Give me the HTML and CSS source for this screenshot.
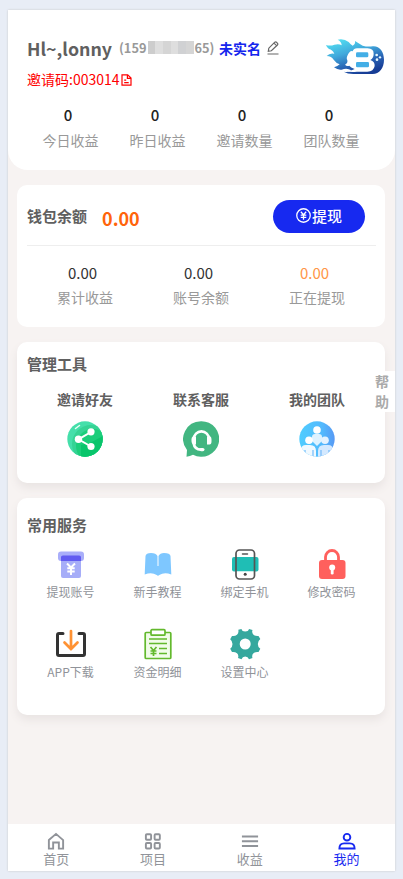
FILE: index.html
```html
<!DOCTYPE html>
<html lang="zh-CN">
<head>
<meta charset="utf-8">
<title>我的</title>
<link rel="stylesheet" href="styles.css">
</head>
<body>
<div class="app">
  <header class="profile">
    <div class="profile-top">
      <div class="identity">
        <div class="name-row">
          <span class="name">Hl~,lonny</span>
          <span class="phone">(159<i class="mask"><b></b><b></b><b></b><b></b><b></b><b></b></i>65)</span>
          <span class="verify">未实名</span>
          <svg class="edit" viewBox="0 0 12 14" fill="none" stroke="#666" stroke-width="1.2"><path d="M1.3 10.3 1.8 7.2 7.8 1.2Q8.6.5 9.5 1.3L10.5 2.3Q11.2 3.1 10.4 4L4.4 9.8ZM7 2.2l2.5 2.5M.5 13h11"/></svg>
        </div>
        <div class="invite"><span>邀请码:003014</span><svg viewBox="0 0 11 12" fill="none" stroke="#f00" stroke-width="1.2"><path d="M1 .8h5.7L10 4v7.2H1ZM6.4 1v3.3H10M3.2 6.2h2M3.2 8.7h4.5"/></svg></div>
      </div>
      <svg class="logo" viewBox="15 20 180 114">
        <defs><linearGradient id="flame" x1=".1" y1="0" x2=".6" y2="1"><stop offset="0" stop-color="#55e4f3"/><stop offset=".42" stop-color="#40a9dc"/><stop offset=".75" stop-color="#2860b2"/><stop offset="1" stop-color="#173d96"/></linearGradient></defs>
        <path fill="url(#flame)" d="M18 44Q31 48 43 43Q57 39 65 45Q65 34 53 28Q72 24 86 35Q92 43 98 46Q107 42 105 32Q116 39 128 46Q142 50 158 48C178 46 192 64 192 88C192 114 178 130 158 131H108Q85 133 71 124Q86 127 94 120Q81 112 65 118Q54 120 42 111Q53 108 59 102Q48 98 41 88Q35 78 20 77Q29 67 43 70Q37 58 27 56Q20 51 18 44Z"/>
        <path fill="#fff" d="M86 69Q92 60 98 63Q101 54 111 54H143Q161 55 161 70Q161 83 151 89Q165 94 164 107Q161 124 142 124H111Q88 127 77 121Q94 123 104 116Q92 112 88 106Q80 109 75 103Q84 98 82 90Q77 83 86 69Z"/>
        <rect x="108" y="66" width="37" height="15" rx="4" fill="#43aee6"/><rect x="108" y="95" width="39" height="16" rx="4" fill="#43aee6"/>
        <g fill="#e4f8ff"><circle cx="170" cy="74" r="4"/><circle cx="180" cy="81" r="3.5"/><circle cx="171" cy="88" r="4"/></g>
      </svg>
    </div>
    <div class="stats">
      <div class="stat"><b>0</b><span>今日收益</span></div>
      <div class="stat"><b>0</b><span>昨日收益</span></div>
      <div class="stat"><b>0</b><span>邀请数量</span></div>
      <div class="stat"><b>0</b><span>团队数量</span></div>
    </div>
  </header>

  <main>
    <section class="card wallet">
      <div class="wallet-top">
        <h2>钱包余额</h2><strong>0.00</strong>
        <button class="withdraw"><svg viewBox="0 0 14 14" fill="none" stroke="#fff" stroke-width="1.2"><circle cx="7" cy="7" r="6.3"/><path d="M4.5 3.5 7 6.3l2.5-2.8M7 6v5M4.4 6.7h5.2M4.4 8.8h5.2"/></svg><span>提现</span></button>
      </div>
      <div class="stats amounts">
        <div class="stat"><b>0.00</b><span>累计收益</span></div>
        <div class="stat"><b>0.00</b><span>账号余额</span></div>
        <div class="stat pending"><b>0.00</b><span>正在提现</span></div>
      </div>
    </section>

    <section class="card tools">
      <h2>管理工具</h2>
      <div class="tool-list">
        <div class="tool"><span>邀请好友</span>
          <svg viewBox="0 0 36 36"><defs><clipPath id="round"><circle cx="18" cy="18" r="17.7"/></clipPath></defs><g clip-path="url(#round)"><path fill="#45dfaa" d="M0 0h36v36H0z"/><circle cx="24" cy="23" r="19" fill="#35d394"/><circle cx="26" cy="25" r="17" fill="#1bce7a"/><path fill="#09c56b" d="M14 24l9-2 13-7v21H14z"/></g><path d="m8.5 7.5 4-3" stroke="#e9fff5" stroke-width="1.5" stroke-linecap="round"/><path d="M24 11 11.5 18.3 24 25.5" fill="none" stroke="#fff" stroke-width="2"/><g fill="#fff"><circle cx="24" cy="10.8" r="3.6"/><circle cx="11.5" cy="18.2" r="3.7"/><circle cx="24" cy="25.5" r="3.6"/></g></svg>
        </div>
        <div class="tool"><span>联系客服</span>
          <svg viewBox="0 0 36 36"><path fill="#42b681" d="M18 .2a17.8 17.8 0 1 1-8 33.5Q7 35.4 3.5 35.7L4 29A17.8 17.8 0 0 1 18 .2Z"/><path d="M10.8 18a7.6 7.600 0 0 1 15.200 0M10.500 22Q11.500 28.600 18 28.600" fill="none" stroke="#fff" stroke-width="2.600"/><path fill="#fff" d="M10 15.500h3v8h-2Q8.500 23 8.500 20v-2Q8.500 16 10 15.500ZM24 15.500h3.500q1 1 1 3v2q0 3-2 3H24Z"/><rect x="16.500" y="27" width="5" height="3.200" rx="1.600" fill="#fff"/></svg>
        </div>
        <div class="tool"><span>我的团队</span>
          <svg viewBox="0 0 36 36"><defs><linearGradient id="team"><stop stop-color="#50cdff"/><stop offset=".65" stop-color="#53b9fd"/><stop offset="1" stop-color="#5798f4"/></linearGradient></defs><g clip-path="url(#round)"><path fill="url(#team)" d="M0 0h36v36H0z"/><path fill="#def2ff" d="M13 20v-4q0-3 3-3h4q3 0 3 3v4l-5 5z"/><path fill="#f0f9ff" d="M2 36v-7q0-5 5-5h4q6 0 6 6v6Z"/><path fill="#d4e9ff" d="M19 36v-6q0-6 6-6h4q5 0 5 5v7Z"/><path stroke="#71bafa" stroke-width="1.2" d="M6 29v7M14 29v7M22 29v7M30 29v7"/></g><g fill="#fff"><circle cx="18" cy="9" r="3.800"/><circle cx="10" cy="19.300" r="3.800"/><circle cx="26" cy="19.300" r="3.800" fill="#e4f2ff"/></g></svg>
        </div>
      </div>
    </section>

    <section class="card services">
      <h2>常用服务</h2>
      <div class="service-list">
        <div class="service"><svg viewBox="0 0 32 32"><rect x="3" y="3.500" width="26" height="9.500" rx="3" fill="#a9aefa"/><rect x="6" y="7" width="20" height="23" rx="2" fill="#a6adf8"/><path fill="#625cf1" d="M6 13V9q0-1.500 2-1.500h16q2 0 2 1.500v4z"/><path d="m12 15.500 4 4 4-4M16 19v8M12.300 20.300h7.400M12.300 23.500h7.400" fill="none" stroke="#fff" stroke-width="2"/></svg><span>提现账号</span></div>
        <div class="service"><svg viewBox="0 0 32 32"><path fill="#7ec7ff" d="M3.500 8Q4 5 9 5q5 0 6.500 3v10h1V8Q18 5 22 5q6 0 6.500 3L29.300 26.500q-7-2.500-12 .5-1.300 1.500-2.600 0-5-3-12-.5Z"/></svg><span>新手教程</span></div>
        <div class="service"><svg viewBox="0 0 32 32"><rect x="3" y="9" width="26.500" height="14.500" rx="2" fill="#1fbeb5"/><path fill="#fff" d="M7 9V5q0-3 3-3h12.500q3 0 3 3v4zM7 23.500h18.500v4q0 3.500-3 3.500H10q-3 0-3-3.500z"/><rect x="7" y="2" width="18.500" height="29" rx="3.500" fill="none" stroke="#555" stroke-width="1.700"/><path d="M13.500 6h5" stroke="#555" stroke-width="1.500" stroke-linecap="round"/><circle cx="16.200" cy="26.300" r="1.500" fill="#444"/></svg><span>绑定手机</span></div>
        <div class="service"><svg viewBox="0 0 32 32"><path d="M9.500 14V9a6.500 6.500 0 0 1 13 0v5" fill="none" stroke="#ff605d" stroke-width="2.800"/><rect x="3" y="12" width="26.500" height="19" rx="3" fill="#ff605d"/><circle cx="16.200" cy="19.500" r="3" fill="#fff"/><rect x="14.800" y="20" width="2.800" height="6.500" rx="1.300" fill="#fff"/></svg><span>修改密码</span></div>
        <div class="service"><svg viewBox="0 0 32 32" fill="none" stroke-width="3"><path stroke="#333" stroke-linejoin="round" stroke-linecap="round" d="M8 5.500H4Q2.500 5.500 2.500 7v19q0 1.500 1.500 1.500h24q1.500 0 1.500-1.500V7q0-1.500-1.500-1.500h-4"/><path stroke="#ff9233" stroke-width="2.700" stroke-linecap="round" d="M16 3v18M9.500 14.500 16 21l6.500-6.500"/></svg><span>APP下载</span></div>
        <div class="service"><svg viewBox="0 0 32 32" fill="none" stroke="#63b92d" stroke-width="1.700"><rect x="3.200" y="4.500" width="25.600" height="26" rx="1" fill="#f1fce9"/><rect x="9" y="1.700" width="14" height="5.500" rx="1" fill="#fff"/><path d="M7 11h18M7 15.500h18M17 20.500h8M17 25.500h8M8.500 19l3 3.500 3-3.500M11.500 22v6M8.500 23h6M8.500 25.500h6"/></svg><span>资金明细</span></div>
        <div class="service"><svg viewBox="0 0 32 32"><path fill="#35a89e" fill-rule="evenodd" d="M9.300 1.700 12.500 1Q13 3.500 16.200 3.500T20 1l3.500 1Q22.500 5 24.500 6.700T29.500 8L31.300 11Q28.800 13 28.800 16t2.500 4.800L29.500 24q-3-.5-5 1.300T23.500 30L20 31.200Q19 28.500 16.200 28.500T12.500 31.200L9 30q1-3-1-4.700T3 24L1.200 20.800Q3.500 19 3.500 16T1.200 11.200L3 8q3 .5 5-1.300T9.300 1.700ZM16.200 10.500a5.500 5.500 0 1 0 0 11 5.500 5.500 0 1 0 0-11Z"/></svg><span>设置中心</span></div>
      </div>
    </section>
  </main>

  <nav class="tabs">
    <div class="tab"><svg viewBox="0 0 20 20"><path d="M2.500 8.500 10 2l7.500 6.500v9H13V11H7v6.500H2.500Z"/></svg><span>首页</span></div>
    <div class="tab"><svg viewBox="0 0 20 20"><rect x="2.500" y="2.300" width="5.500" height="5.800" rx="1"/><rect x="11.700" y="2.300" width="5.500" height="5.800" rx="1"/><rect x="2.500" y="11.500" width="5.500" height="5.800" rx="1"/><rect x="11.700" y="11.500" width="5.500" height="5.800" rx="1"/></svg><span>项目</span></div>
    <div class="tab"><svg viewBox="0 0 20 20"><path d="M1.500 4.700h17M1.500 9.700h17M1.500 14.700h17"/></svg><span>收益</span></div>
    <div class="tab active"><svg viewBox="0 0 20 20"><circle cx="10" cy="5.500" r="3.500"/><path d="M2 17.400Q2 12 7 12h6q5 0 5 5.400Z"/></svg><span>我的</span></div>
  </nav>
  <aside class="help">帮助</aside>
</div>
</body>
</html>
```

FILE: styles.css
```css
* { box-sizing: border-box; }

body {
  margin: 0;
  height: 879px;
  padding: 10px 8px 8px;
  background: #e8edf6;
  color: #333;
  font-family: "Noto Sans CJK SC", sans-serif;
  font-size: 14px;
  overflow: hidden;
}

svg { display: block; flex: none; }
h2 { margin: 0; font-size: 15px; line-height: 22px; font-weight: 700; color: #606060; }

.app {
  position: relative;
  display: flex;
  flex-direction: column;
  width: 387px;
  height: 861px;
  background: #f7f3f2;
  box-shadow: 0 0 2px #c8c8c8;
}

.profile {
  height: 160px;
  padding: 26px 10px 0 19px;
  background: #fff;
  border-radius: 0 0 20px 20px;
}
.profile-top { display: flex; justify-content: space-between; height: 66px; }
.name-row { display: flex; align-items: center; height: 23px; white-space: nowrap; }
.name { width: 92px; font-size: 17.8px; font-weight: 700; color: #606060; }
.phone { display: flex; align-items: center; width: 100px; font-size: 12.8px; font-weight: 700; color: #999; }
.mask { display: flex; width: 46px; height: 13px; margin: 0 1px; }
.mask b { flex: 1; background: #dedede; }
.mask b:nth-child(1) { background: #cdcdcd; }
.mask b:nth-child(3n) { background: #d5d5d5; }
.mask b:nth-child(5) { background: #d0d1d3; }
.verify { width: 48px; color: #1526ed; font-weight: 700; }
.edit { width: 12px; height: 14px; }
.invite { display: flex; align-items: center; height: 20px; margin-top: 10px; color: #f00; }
.invite svg { width: 11px; height: 12px; margin: 1px 0 0 1px; }
.logo { width: 60px; height: 38px; margin-top: 1px; }

.stats { display: flex; width: 348px; }
.stat { flex: 1; text-align: center; }
.stat b { display: block; padding-right: 5px; font-size: 15px; line-height: 26px; font-weight: 500; color: #222; }
.stat span { display: block; line-height: 24px; color: #999; }

main { flex: 1; padding: 15px 10px 0 9px; }
.card {
  margin-bottom: 15px;
  padding: 0 9px 0 10px;
  background: #fff;
  border-radius: 10px;
}

.wallet { height: 142px; }
.wallet-top { display: flex; align-items: center; height: 61px; border-bottom: 1px solid #eee; }
.wallet-top h2 { margin-top: 2px; }
.wallet-top strong { margin: 5px 0 0 15px; font-size: 18px; font-weight: 700; color: #ff640b; }
.withdraw {
  display: flex;
  align-items: center;
  justify-content: center;
  width: 92px;
  height: 33px;
  margin: 2px 11px 0 auto;
  padding: 0 0 1px;
  border: 0;
  border-radius: 17px;
  background: #1729f0;
  color: #fff;
  font: 500 15px "Noto Sans CJK SC", sans-serif;
}
.withdraw svg { width: 15px; height: 15px; margin-right: 1px; }
.amounts { padding-top: 14px; }
.amounts .stat b { font-weight: 400; line-height: 25px; color: #333; }
.amounts .pending b { color: #ff9648; }

.tools { height: 141px; padding-top: 11px; box-shadow: 0 5px 8px #e9e4e3; }
.tool-list { display: flex; width: 348px; margin-top: 13px; }
.tool { flex: 1; display: flex; flex-direction: column; align-items: center; }
.tool span { line-height: 22px; font-weight: 700; color: #606060; }
.tool svg { width: 36px; height: 36px; margin-top: 11px; }

.services { height: 217px; padding-top: 16px; box-shadow: 0 5px 8px #e9e4e3; }
.service-list { display: grid; grid-template-columns: repeat(4, 1fr); grid-auto-rows: 80px; width: 348px; margin-top: 12px; }
.service { display: flex; flex-direction: column; align-items: center; }
.service svg { width: 32px; height: 32px; }
.service span { line-height: 24px; font-size: 12px; color: #909399; }

.tabs { display: flex; height: 47px; background: #fff; }
.tab { flex: 1; display: flex; flex-direction: column; align-items: center; padding-top: 8px; font-size: 13px; line-height: 15px; color: #909399; }
.tab svg { width: 20px; height: 19px; fill: none; stroke: currentColor; stroke-width: 2; }
.tab.active { color: #1729f0; }

.help {
  position: absolute;
  top: 361px;
  right: 0;
  width: 22px;
  height: 41px;
  padding-left: 2px;
  background: #fff;
  color: #aaa;
  font-weight: 700;
  line-height: 20px;
}
```
